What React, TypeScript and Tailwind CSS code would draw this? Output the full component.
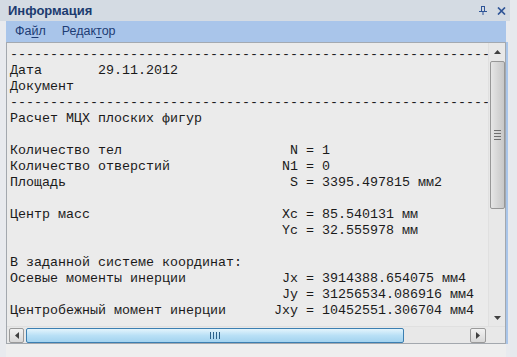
import React from 'react';

const dashes = '-'.repeat(60);

const lines: string[] = [
  dashes,
  'Дата       29.11.2012',
  'Документ',
  dashes,
  'Расчет МЦХ плоских фигур',
  '',
  'Количество тел                     N = 1',
  'Количество отверстий              N1 = 0',
  'Площадь                            S = 3395.497815 мм2',
  '',
  'Центр масс                        Xc = 85.540131 мм',
  '                                  Yc = 32.555978 мм',
  '',
  'В заданной системе координат:',
  'Осевые моменты инерции            Jx = 3914388.654075 мм4',
  '                                  Jy = 31256534.086916 мм4',
  'Центробежный момент инерции      Jxy = 10452551.306704 мм4',
];

const UpArrow = () => (
  <svg width="7" height="4" viewBox="0 0 7 4"><path d="M0 4 L3.5 0 L7 4 Z" fill="#404040" /></svg>
);
const DownArrow = () => (
  <svg width="7" height="4" viewBox="0 0 7 4"><path d="M0 0 L3.5 4 L7 0 Z" fill="#404040" /></svg>
);
const LeftArrow = () => (
  <svg width="4" height="7" viewBox="0 0 4 7"><path d="M4 0 L0 3.5 L4 7 Z" fill="#404040" /></svg>
);
const RightArrow = () => (
  <svg width="4" height="7" viewBox="0 0 4 7"><path d="M0 0 L4 3.5 L0 7 Z" fill="#404040" /></svg>
);

const App: React.FC = () => {
  return (
    <div className="w-[517px] h-[357px] bg-[#e9ecf0] flex overflow-hidden font-['Liberation_Sans',sans-serif]">
      <div className="w-[510px] flex flex-col">
        {/* Title bar */}
        <div className="h-[21px] bg-[#d4dbe3] flex items-center pl-2 pr-[4px]">
          <span className="text-[13px] font-bold text-[#1c3b70] leading-none">Информация</span>
          <div className="ml-auto flex items-center gap-[10px]">
            {/* pin */}
            <svg width="8" height="9" viewBox="0 0 8 9">
              <path d="M2 0 H6 V5 H8 V6 H4.5 V9 H3.5 V6 H0 V5 H2 Z M3 1 V5 H5 V1 Z" fill="#2f5597" />
            </svg>
            {/* close */}
            <svg width="9" height="8" viewBox="0 0 9 8">
              <path d="M1 0.5 L8 7.5 M8 0.5 L1 7.5" stroke="#2f5597" strokeWidth="1.7" />
            </svg>
          </div>
        </div>

        <div className="flex-1 flex pl-[6px] pr-[2px] bg-[#e8eaee]">
          <div className="flex-1 min-w-0 flex flex-col">
            {/* Menu bar */}
            <div className="h-[22px] bg-[#a9c5ea] flex items-center gap-[16px] pl-[9px] text-[12.5px] text-[#1d3c74] border-b border-[#a3a9b1]">
              <span>Фа<span className="underline underline-offset-2">й</span>л</span>
              <span>Редак<span className="underline underline-offset-2">т</span>ор</span>
            </div>

            {/* Content frame */}
            <div className="h-[301px] border-l border-b border-r border-[#a3a8ae] flex flex-col bg-[#ebebeb]">
              <div className="flex flex-1 min-h-0">
                <div className="flex-1 min-w-0 overflow-hidden pt-[4px] pl-[3px]">
                  {lines.map((l, i) => (
                    <div
                      key={i}
                      className="h-[16px] leading-[16px] whitespace-pre text-[13.33px] text-[#1a1a1a] font-['Liberation_Mono',monospace]"
                    >
                      {l}
                    </div>
                  ))}
                </div>
                {/* Vertical scrollbar */}
                <div className="w-[17px] shrink-0 bg-[#e8e8e8] border-l border-[#e0e0e0] flex flex-col items-center">
                  <div className="h-[17px] w-full flex items-center justify-center pt-[1px]">
                    <UpArrow />
                  </div>
                  <div className="mt-[1px] h-[148px] w-[15px] rounded-[2px] border border-[#979797] bg-gradient-to-r from-[#e6e6e6] via-[#d6d6d6] to-[#c8c8c8] flex items-center justify-center">
                    <div className="flex flex-col gap-[2px]">
                      <div className="w-[7px] h-[1px] bg-[#707070]" />
                      <div className="w-[7px] h-[1px] bg-[#707070]" />
                      <div className="w-[7px] h-[1px] bg-[#707070]" />
                      <div className="w-[7px] h-[1px] bg-[#707070]" />
                    </div>
                  </div>
                  <div className="mt-auto h-[17px] w-full flex items-center justify-center">
                    <DownArrow />
                  </div>
                </div>
              </div>
              {/* Horizontal scrollbar */}
              <div className="h-[17px] shrink-0 flex bg-[#e8e8e8] border-t border-[#e0e0e0]">
                <div className="flex-1 min-w-0 flex items-center px-[2px] gap-[2px]">
                  <div className="w-[15px] h-[15px] shrink-0 rounded-[2px] border border-[#9a9a9a] bg-gradient-to-b from-[#f2f2f2] to-[#d8d8d8] flex items-center justify-center">
                    <LeftArrow />
                  </div>
                  <div className="w-[378px] h-[15px] shrink-0 rounded-[2px] border border-[#3c7fb1] bg-gradient-to-b from-[#e3f4fc] via-[#b9e0f6] to-[#a3d3ef] flex items-center justify-center">
                    <div className="flex gap-[2px]">
                      <div className="w-[1px] h-[7px] bg-[#2c628b]" />
                      <div className="w-[1px] h-[7px] bg-[#2c628b]" />
                      <div className="w-[1px] h-[7px] bg-[#2c628b]" />
                      <div className="w-[1px] h-[7px] bg-[#2c628b]" />
                    </div>
                  </div>
                  <div className="ml-auto w-[16px] h-[15px] shrink-0 rounded-[2px] border border-[#9a9a9a] bg-gradient-to-b from-[#f2f2f2] to-[#d8d8d8] flex items-center justify-center">
                    <RightArrow />
                  </div>
                </div>
                <div className="w-[17px] shrink-0 bg-[#e8e8e8]" />
              </div>
            </div>
            <div className="flex-1 bg-[#eeeeee]" />
          </div>
          <div className="w-[2px] shrink-0 bg-[#a9c5e9] h-[302px] mt-[21px]" />
        </div>
      </div>
      <div className="flex-1 bg-[#e6e9ed]" />
    </div>
  );
};

export default App;
